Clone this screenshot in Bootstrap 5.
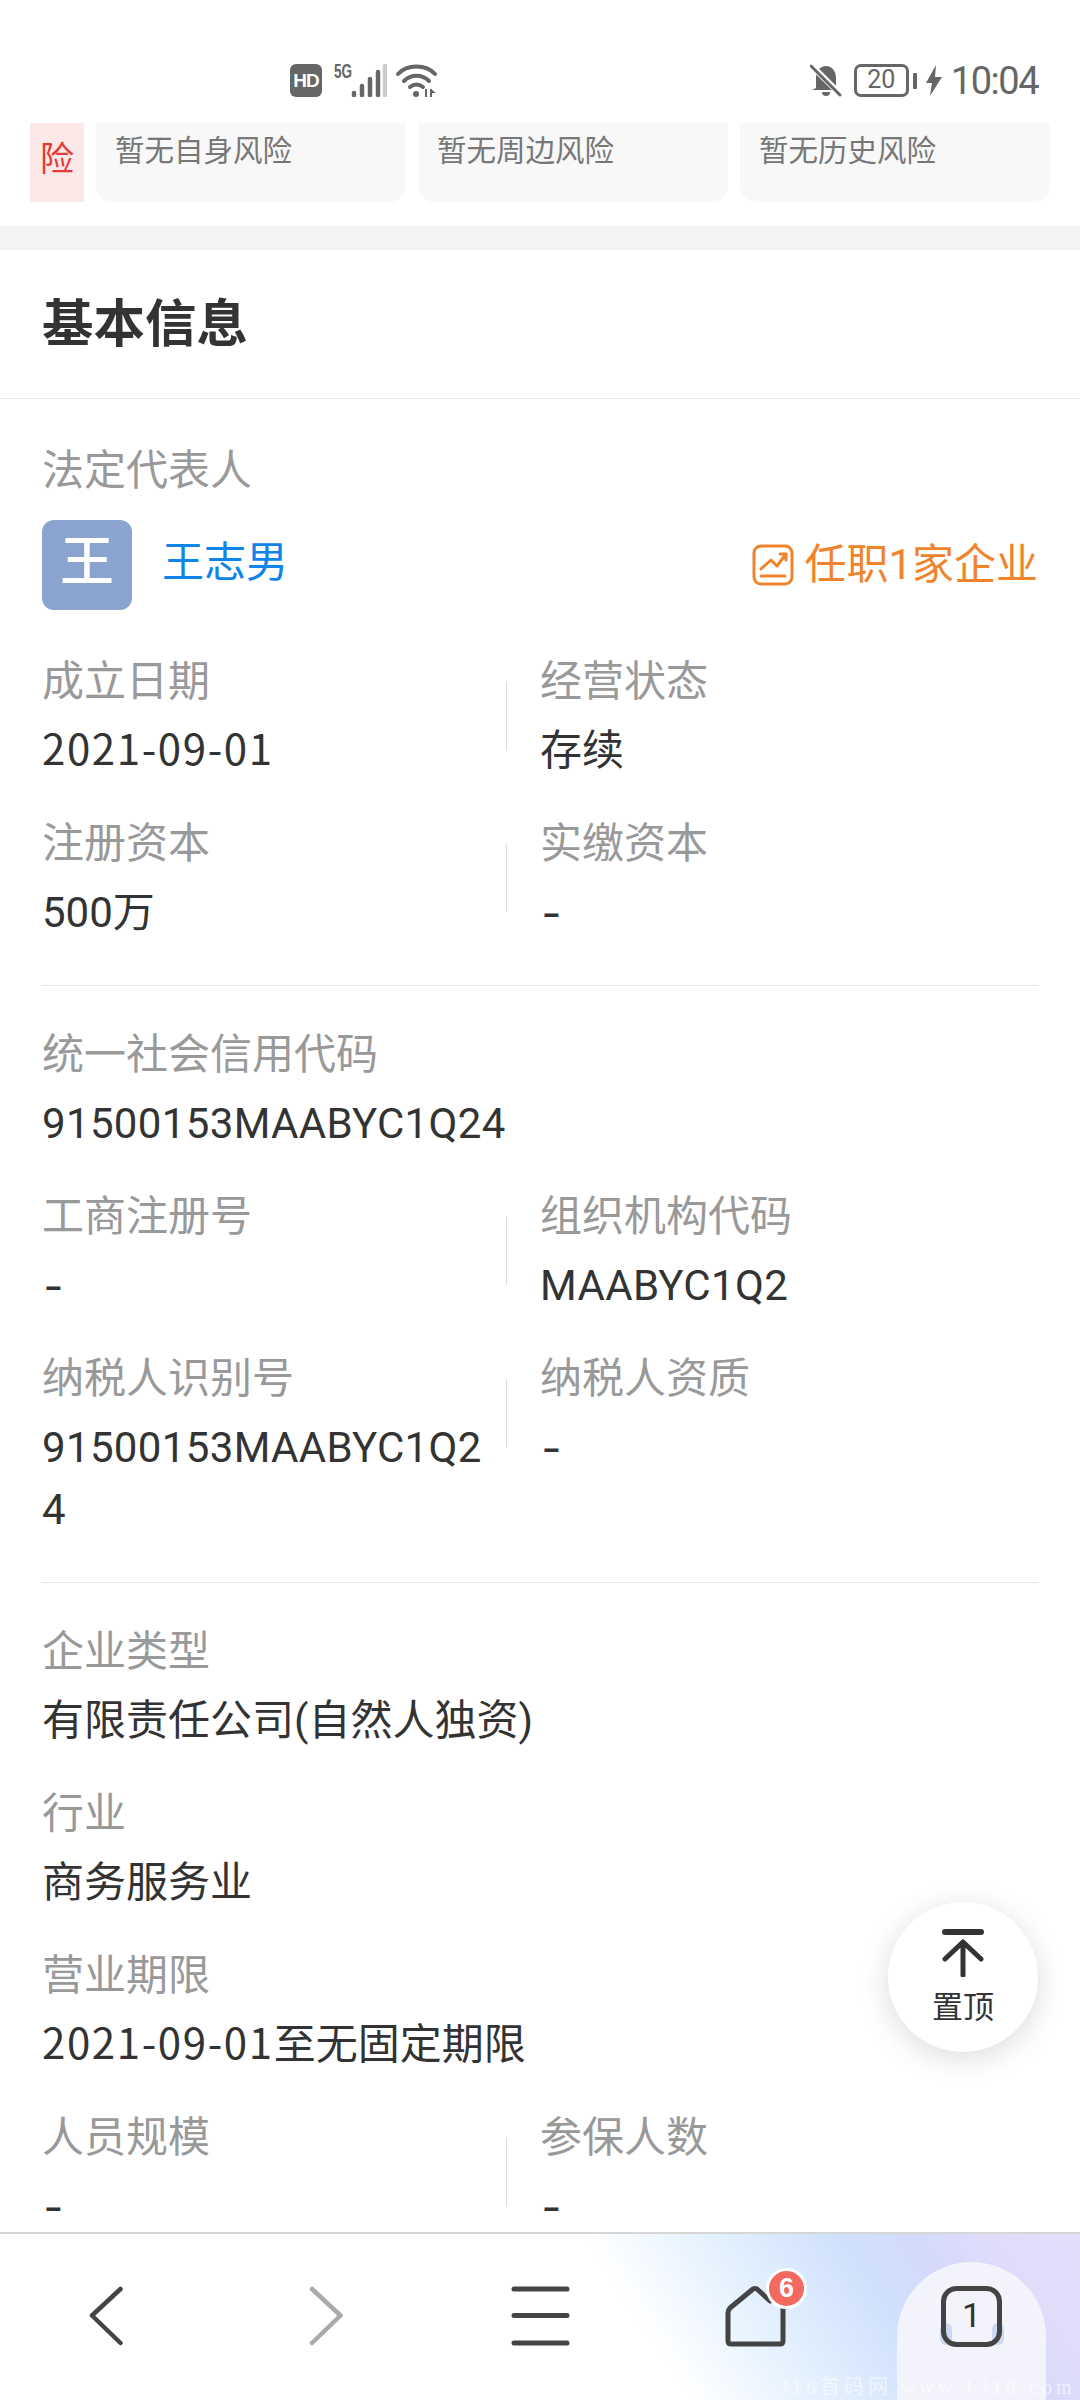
<!DOCTYPE html>
<html lang="zh">
<head>
<meta charset="utf-8">
<title>基本信息</title>
<link href="https://cdn.jsdelivr.net/npm/bootstrap@5.3.0/dist/css/bootstrap.min.css" rel="stylesheet">
<style>
html,body{margin:0;background:#fff}
body{width:1080px;height:2400px;font-family:Roboto,"Noto Sans CJK SC",sans-serif;position:relative;overflow:hidden;color:#333}
.phone-status{height:123px;color:#666;padding-top:64px;flex:none}
.st-left{margin-left:290px}
.st-time{font-size:38px;line-height:33px;margin-left:9px;margin-top:1px;letter-spacing:-1.5px;color:#666}
.hd-tag{width:32px;height:33px;background:#666;border-radius:6px;color:#fff;font:700 19px/33px "Liberation Sans",sans-serif;text-align:center;letter-spacing:-1px}
.fiveg{font:700 20px/17px "Liberation Sans",sans-serif;width:17px;margin-left:12px;margin-top:-1px;transform:scaleX(.68);transform-origin:left top}
.batt{width:55px;height:33px;border:3px solid #666;border-radius:7px;font-size:25px;line-height:26px;text-align:center;color:#666;margin-left:12px}
.risk-strip{height:79px;padding:0 30px;gap:12px;flex:none;margin-bottom:24px}
.risk-tag{width:54px;background:#fde8e8;color:#e53a3c;font-size:34px;line-height:72px;text-align:center}
.risk-cell{background:#f8f8f8;border-radius:0 0 16px 16px;color:#777;font-size:29.5px;line-height:56px;padding-left:19px;flex:1 1 0}
.band{height:24px;background:#f2f3f5;flex:none}
.sec-head{height:149px;border-bottom:1px solid #e6e6e6;padding-left:42px;font-size:51.5px;font-weight:700;line-height:150px;color:#333;flex:none}
.main-area{flex:1 1 0;overflow:hidden;min-height:0}
.info{padding:39px 42px 0 42px}
.lbl{font-size:42px;line-height:62px;padding-top:2px;color:#999;margin-bottom:5px}
.val{font-size:42px;line-height:62px;padding-top:2px;color:#333;margin-bottom:29px;word-break:break-all}
.code{letter-spacing:.35px}
.wrapv{max-width:452px}
.nf{font-family:"Noto Sans CJK SC",sans-serif;line-height:58px;padding-top:0;margin-bottom:35px}
.dt{letter-spacing:1.6px}
.dashv{font-weight:500;transform:scaleX(1.25);transform-origin:left center;margin-left:2px}
.lbl.only{margin-bottom:18px}
.person{height:90px;margin-bottom:39px}
.avatar{width:90px;height:90px;background:#8ba3cf;color:#fff;border-radius:12px;font-size:54px;font-weight:500;line-height:86px;text-align:center}
.pname{font-size:42px;color:#0f84ea;margin-left:30px;line-height:86px}
.pjob{font-size:42px;color:#f0842c;margin-left:auto;line-height:86px}
.pjob svg{margin-right:10px}
.c-left{width:464px;flex:none}
.c-div{width:1px;height:68px;background:#dcdcdc;margin-top:33px;flex:none}
.c-right{padding-left:33px;flex:1 1 0}
.sep{height:1px;background:#e6e6e6;margin:12px 0 36px}
.to-top{position:absolute;left:888px;top:1902px;width:150px;height:150px;border-radius:50%;background:#fff;box-shadow:0 6px 30px rgba(0,0,0,.14);font-size:31px;line-height:36px;color:#333;text-align:center;padding-top:27px}
.to-top svg{display:block;margin:0 auto 13px}
.bottom-bar{height:168px;border-top:2px solid #d6d6d6;position:relative;flex:none;overflow:hidden;
background:linear-gradient(56deg,#fff 0,#fff 58%,#e6f2fe 68%,#d0e0fc 80%,#d4dafc 86%,#e2dcfb 93%,#e4defb 100%)}
.bb-item{position:absolute;top:0}
.tab-arch{position:absolute;left:897px;top:28px;width:149px;height:150px;border-radius:75px 75px 0 0;background:#f3f3fc}
.tab-num{position:absolute;left:942px;top:53px;width:59px;height:59px;font-size:34px;line-height:57px;text-align:center;color:#333}
.blob{position:absolute;top:89px;width:12px;height:22px;background:#cdd9f0;border-radius:6px}
.dot-badge{position:absolute;left:766px;top:34px;width:41px;height:41px;border-radius:50%;background:#f4695f;border:3px solid #fff;color:#fff;font:700 27px/34px "Liberation Sans",sans-serif;text-align:center}
.wm{position:absolute;left:778px;top:142px;white-space:nowrap;color:rgba(255,255,255,.6);font-family:"Liberation Serif","Noto Sans CJK SC",serif;font-size:20px;line-height:22px;letter-spacing:4px}
</style>
</head>
<body class="d-flex flex-column">
<div class="phone-status d-flex align-items-start">
  <div class="st-left d-flex align-items-start">
    <div class="hd-tag">HD</div>
    <div class="fiveg">5G</div>
    <svg width="36" height="33" viewBox="0 0 36 33"><g stroke="#666" stroke-width="4.5" stroke-linecap="round"><path d="M3 29v2M11 22v9M19 15v16M27 8v23"/><path d="M34 2v29" stroke="#ccc"/></g></svg>
    <svg width="42" height="33" viewBox="0 0 42 33" style="margin-left:9px" fill="none"><g stroke="#666" stroke-width="4" stroke-linecap="round"><path d="M2 10C11 0 30 0 39 10"/><path d="M8 17C15 10 26 10 33 17"/><path d="M14 23c4-3 9-3 13 0"/></g><circle cx="20" cy="30" r="3" fill="#666"/><path d="M30 33v-8M35 33v-8" stroke="#666" stroke-width="2"/><path d="M35 25l5 4h-5z" fill="#666"/></svg>
  </div>
  <div class="d-flex align-items-start ms-auto" style="margin-right:42px">
    <svg width="32" height="33" viewBox="0 0 32 33"><path d="M6 24V14C6 7 10 2 16 2s10 5 10 12v10l4 2H2z" fill="#666"/><path d="M12 28h8a4 4 0 0 1-8 0z" fill="#666"/><path d="M2 2l28 28" stroke="#fff" stroke-width="6"/><path d="M1 2l29 29" stroke="#666" stroke-width="3" stroke-linecap="round"/></svg>
    <div class="batt">20</div>
    <svg width="9" height="33" viewBox="0 0 9 33" style="margin-left:4px"><rect x="0" y="9" width="4" height="16" rx="1" fill="#666"/></svg>
    <svg width="16" height="33" viewBox="0 0 16 33" style="margin-left:4px"><path d="M10 1L0 19h6l-2 13L16 13H9z" fill="#666"/></svg>
    <div class="st-time">10:04</div>
  </div>
</div>
<div class="risk-strip d-flex">
  <div class="risk-tag">险</div>
  <div class="risk-cell">暂无自身风险</div>
  <div class="risk-cell">暂无周边风险</div>
  <div class="risk-cell">暂无历史风险</div>
</div>
<div class="band"></div>
<div class="sec-head">基本信息</div>
<div class="main-area">
  <div class="info">
    <div class="lbl only">法定代表人</div>
    <div class="person d-flex">
      <div class="avatar">王</div>
      <div class="pname">王志男</div>
      <div class="pjob d-flex align-items-center">
        <svg width="42" height="42" viewBox="0 0 42 42" fill="none" stroke="#f0842c" stroke-width="3" stroke-linecap="round" stroke-linejoin="round"><rect x="2" y="2" width="38" height="38" rx="7"/><path d="M9 25l10-9 6 6 9-12M28 10h6v6"/><path d="M9 32h24"/></svg>
        <span>任职1家企业</span>
      </div>
    </div>
    <div class="d-flex"><div class="c-left"><div class="lbl">成立日期</div><div class="val nf"><span class="dt">2021-09-01</span></div></div><div class="c-div"></div><div class="c-right"><div class="lbl">经营状态</div><div class="val">存续</div></div></div>
    <div class="d-flex"><div class="c-left"><div class="lbl">注册资本</div><div class="val">500万</div></div><div class="c-div"></div><div class="c-right"><div class="lbl">实缴资本</div><div class="val nf dashv">-</div></div></div>
    <div class="sep"></div>
    <div class="lbl">统一社会信用代码</div><div class="val code">91500153MAABYC1Q24</div>
    <div class="d-flex"><div class="c-left"><div class="lbl">工商注册号</div><div class="val nf dashv">-</div></div><div class="c-div"></div><div class="c-right"><div class="lbl">组织机构代码</div><div class="val code">MAABYC1Q2</div></div></div>
    <div class="d-flex"><div class="c-left"><div class="lbl">纳税人识别号</div><div class="val code wrapv">91500153MAABYC1Q24</div></div><div class="c-div"></div><div class="c-right"><div class="lbl">纳税人资质</div><div class="val nf dashv">-</div></div></div>
    <div class="sep"></div>
    <div class="lbl">企业类型</div><div class="val">有限责任公司(自然人独资)</div>
    <div class="lbl">行业</div><div class="val">商务服务业</div>
    <div class="lbl">营业期限</div><div class="val nf"><span class="dt">2021-09-01</span>至无固定期限</div>
    <div class="d-flex"><div class="c-left"><div class="lbl">人员规模</div><div class="val nf dashv">-</div></div><div class="c-div"></div><div class="c-right"><div class="lbl">参保人数</div><div class="val nf dashv">-</div></div></div>
  </div>
</div>
<div class="to-top">
  <svg width="44" height="48" viewBox="0 0 44 48" fill="none" stroke="#333" stroke-linecap="round" stroke-linejoin="round"><path d="M4 3h36" stroke-width="6"/><path d="M22 46V13M4 30L22 13l18 17" stroke-width="5"/></svg>
  置顶
</div>
<div class="bottom-bar">
  <svg class="bb-item" style="left:0" width="1080" height="166" viewBox="0 2234 1080 166" fill="none" stroke-linecap="round" stroke-linejoin="round">
    <path d="M120.5 2289L92 2315.5l28.5 27.5" stroke="#444" stroke-width="4.5"/>
    <path d="M312 2289l28.5 26.5L312 2343" stroke="#aaa" stroke-width="4.5"/>
    <path d="M514 2289h53M514 2315.5h53M514 2343h53" stroke="#444" stroke-width="5"/>
    <path d="M770 2301l-13-12q-2-1-4 0l-23 19q-2 2-2 5v28q0 3 3 3h49q3 0 3-3v-40" stroke="#444" stroke-width="5"/>
  </svg>
  <div class="dot-badge">6</div>
  <div class="tab-arch"></div>
  <div class="blob" style="left:940px"></div>
  <div class="blob" style="left:992px"></div>
  <svg class="bb-item" style="left:940px;top:51px" width="63" height="63" viewBox="0 0 63 63" fill="none"><rect x="3.5" y="3.5" width="56" height="56" rx="13" stroke="#444" stroke-width="5"/></svg>
  <div class="tab-num">1</div>
  <div class="wm">318首码网 www.1318.com</div>
</div>
</body>
</html>
